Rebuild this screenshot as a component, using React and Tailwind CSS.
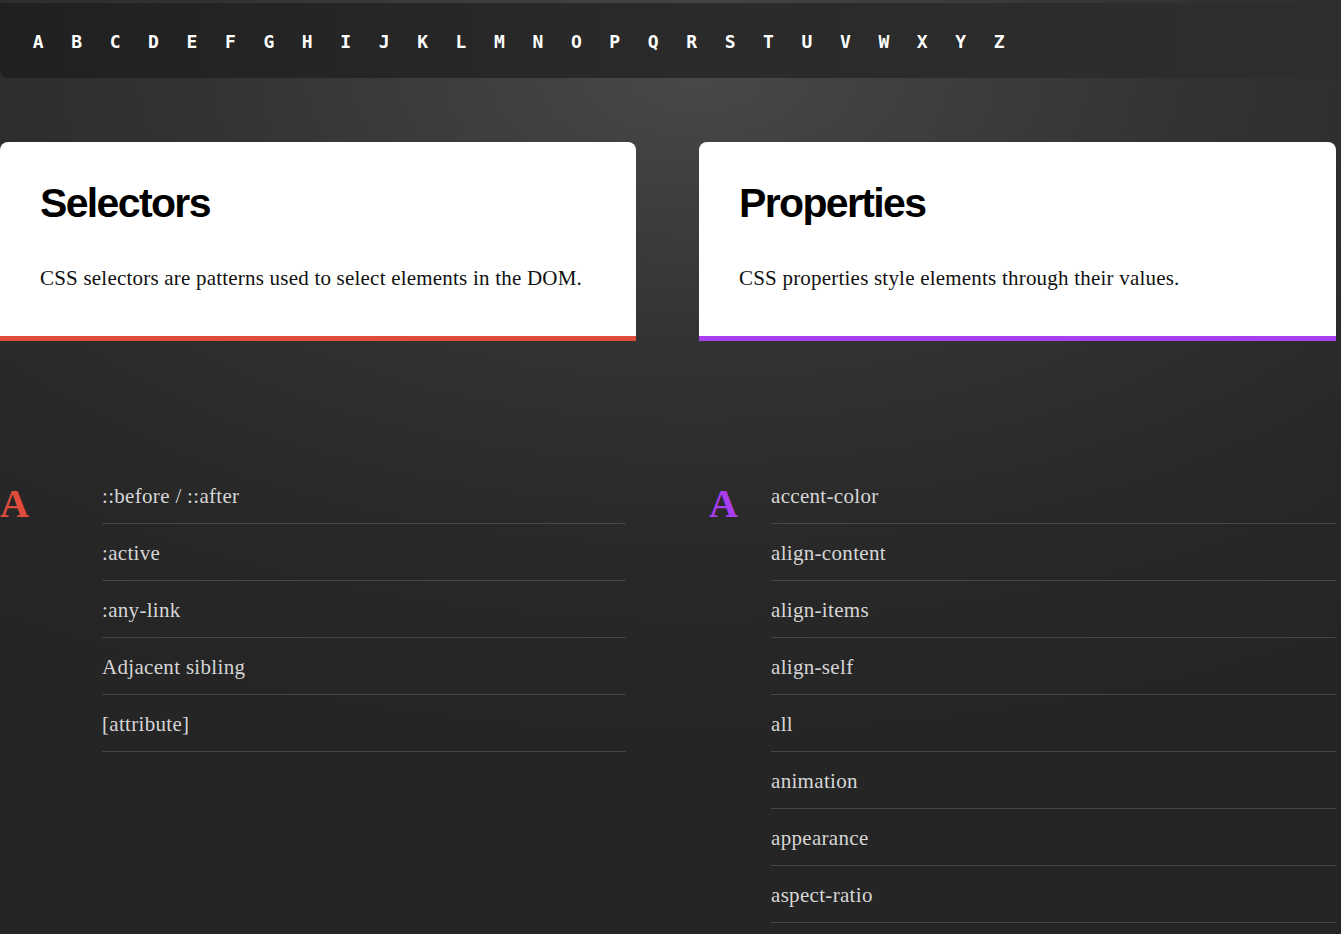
import React from 'react';

const LETTERS = 'ABCDEFGHIJKLMNOPQRSTUVWXYZ'.split('');

const SELECTORS = [
  '::before / ::after',
  ':active',
  ':any-link',
  'Adjacent sibling',
  '[attribute]',
];

const PROPERTIES = [
  'accent-color',
  'align-content',
  'align-items',
  'align-self',
  'all',
  'animation',
  'appearance',
  'aspect-ratio',
];

const Card = ({ title, text, border }) => (
  <div className={`h-[199px] bg-white rounded-t-lg border-b-[5px] ${border} px-[40px] pt-[41px]`}>
    <h2 className="font-['Liberation_Sans',Arial,sans-serif] font-bold text-[41px] leading-none tracking-[-0.04em] text-black">
      {title}
    </h2>
    <p className="mt-[39px] font-['Liberation_Serif','Times_New_Roman',serif] text-[21px] leading-[30px] tracking-[0.01em] text-[#111]">
      {text}
    </p>
  </div>
);

const LetterGroup = ({ items }) => (
  <ul>
    {items.map((item) => (
      <li
        key={item}
        className="pt-[16px] pb-[13px] border-b border-[#454545] font-['Liberation_Serif','Times_New_Roman',serif] text-[21px] leading-[27px] tracking-[0.015em] text-[#d6d6d6]"
      >
        {item}
      </li>
    ))}
  </ul>
);

export default function App() {
  return (
    <div className="min-h-screen pt-[3px] bg-[radial-gradient(ellipse_90%_70%_at_52%_8%,#484848_0%,#333333_40%,#282828_75%,#252525_100%)]">
      {/* Alphabet nav */}
      <nav className="h-[75px] pt-[2px] rounded-bl-lg bg-[linear-gradient(90deg,#202020_0%,#2a2a2a_50%,#2e2e2e_100%)] flex items-center pl-[19px]">
        {LETTERS.map((l) => (
          <a
            key={l}
            href={`#${l}`}
            className="w-[38.44px] text-center font-['DejaVu_Sans_Mono',monospace] font-bold text-[18px] text-white"
          >
            {l}
          </a>
        ))}
      </nav>

      {/* Cards */}
      <div className="grid grid-cols-[636px_637px] gap-x-[63px] mt-[64px]">
        <Card
          title="Selectors"
          text="CSS selectors are patterns used to select elements in the DOM."
          border="border-[#e04c3c]"
        />
        <Card
          title="Properties"
          text="CSS properties style elements through their values."
          border="border-[#a93ef0]"
        />

        {/* Index lists */}
        <div className="mt-[126px] flex pr-[10px]">
          <div className="w-[102px] shrink-0 pt-[17px] font-['Liberation_Serif',serif] font-bold text-[40px] leading-none text-[#e04c3c]">
            A
          </div>
          <div className="flex-1">
            <LetterGroup items={SELECTORS} />
          </div>
        </div>
        <div className="mt-[126px] flex pl-[10px]">
          <div className="w-[62px] shrink-0 pt-[17px] font-['Liberation_Serif',serif] font-bold text-[40px] leading-none text-[#a93ef0]">
            A
          </div>
          <div className="flex-1">
            <LetterGroup items={PROPERTIES} />
          </div>
        </div>
      </div>
    </div>
  );
}
